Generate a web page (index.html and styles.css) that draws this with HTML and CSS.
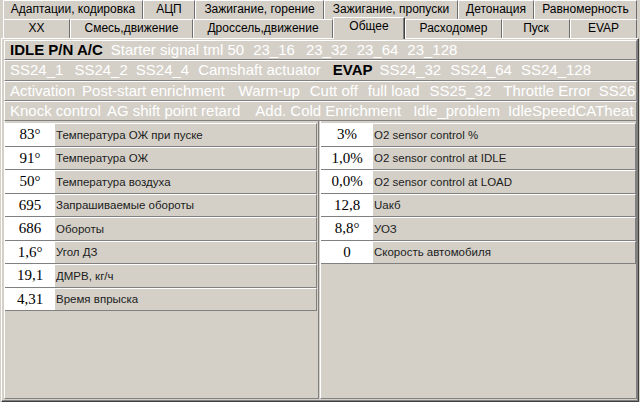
FILE: index.html
```html
<!DOCTYPE html>
<html>
<head>
<meta charset="utf-8">
<link rel="stylesheet" href="styles.css">
</head>
<body>
<div class="tabs">
  <div class="tabrow">
    <div class="tab w140">Адаптации, кодировка</div>
    <div class="tab w52">АЦП</div>
    <div class="tab w129">Зажигание, горение</div>
    <div class="tab w134">Зажигание, пропуски</div>
    <div class="tab w76">Детонация</div>
    <div class="tab w103">Равномерность</div>
  </div>
  <div class="tabrow">
    <div class="tab w67">XX</div>
    <div class="tab w123">Смесь,движение</div>
    <div class="tab w140">Дроссель,движение</div>
    <div class="tab w72 sel">Общее</div>
    <div class="tab w97">Расходомер</div>
    <div class="tab w68">Пуск</div>
    <div class="tab w67">EVAP</div>
  </div>
</div>
<div class="panel">
  <div class="flags">
    <div class="frow"><span class="on">IDLE P/N A/C</span><span>Starter signal tml 50</span><span class="m1">23_16</span><span class="m3">23_32</span><span class="m1">23_64</span><span class="m1">23_128</span></div>
    <div class="frow"><span>SS24_1</span><span class="m3">SS24_2</span><span>SS24_4</span><span class="m1">Camshaft actuator</span><span class="on m4">EVAP</span><span class="m-1">SS24_32</span><span class="m1">SS24_64</span><span class="m1">SS24_128</span></div>
    <div class="frow"><span>Activation</span><span class="m-1">Post-start enrichment</span><span class="m6">Warm-up</span><span class="m2">Cutt off</span><span class="m2">full load</span><span class="m2">SS25_32</span><span class="m4">Throttle Error</span><span class="m-1">SS26</span></div>
    <div class="frow"><span>Knock control</span><span class="m-2">AG shift point retard</span><span class="m7">Add. Cold Enrichment</span><span class="m4">Idle_problem</span><span>IdleSpeedCATheat</span></div>
  </div>
  <div class="tables">
    <div class="sub left">
      <div class="row"><div class="val">83°</div><div class="lab">Температура ОЖ при пуске</div></div>
      <div class="row"><div class="val">91°</div><div class="lab">Температура ОЖ</div></div>
      <div class="row"><div class="val">50°</div><div class="lab">Температура воздуха</div></div>
      <div class="row"><div class="val">695</div><div class="lab">Запрашиваемые обороты</div></div>
      <div class="row"><div class="val">686</div><div class="lab">Обороты</div></div>
      <div class="row"><div class="val">1,6°</div><div class="lab">Угол ДЗ</div></div>
      <div class="row"><div class="val">19,1</div><div class="lab">ДМРВ, кг/ч</div></div>
      <div class="row"><div class="val">4,31</div><div class="lab">Время впрыска</div></div>
    </div>
    <div class="sub right">
      <div class="row"><div class="val">3%</div><div class="lab">O2 sensor control %</div></div>
      <div class="row"><div class="val">1,0%</div><div class="lab">O2 sensor control at IDLE</div></div>
      <div class="row"><div class="val">0,0%</div><div class="lab">O2 sensor control at LOAD</div></div>
      <div class="row"><div class="val">12,8</div><div class="lab">Uакб</div></div>
      <div class="row"><div class="val">8,8°</div><div class="lab">УОЗ</div></div>
      <div class="row"><div class="val">0</div><div class="lab">Скорость автомобиля</div></div>
    </div>
  </div>
</div>
</body>
</html>
```
FILE: styles.css
```css
* { box-sizing: border-box; }
html, body { margin: 0; padding: 0; }
body {
  width: 640px;
  height: 402px;
  overflow: hidden;
  background: #d4d0c8;
  font-family: "Liberation Sans", Arial, sans-serif;
}

/* tabs */
.tabs { height: 38px; padding-left: 3px; }
.tabrow { display: flex; height: 19px; align-items: flex-start; }
.tab {
  height: 19px;
  border-top: 1px solid #ffffff;
  border-left: 1px solid #ffffff;
  border-right: 1px solid #6e6e6e;
  font-size: 12px;
  line-height: 17px;
  text-align: center;
  color: #000;
  white-space: nowrap;
  overflow: hidden;
}
.tab.sel {
  position: relative;
  z-index: 1;
  margin-top: -2px;
  height: 22px;
  background: #d4d0c8;
  border-right-color: #404040;
  box-shadow: inset -1px 0 #808080;
}
.w52 { width: 52px; }
.w67 { width: 67px; }
.w68 { width: 68px; }
.w72 { width: 72px; }
.w76 { width: 76px; }
.w97 { width: 97px; }
.w103 { width: 103px; }
.w123 { width: 123px; }
.w129 { width: 129px; }
.w134 { width: 134px; }
.w140 { width: 140px; }

/* main panel */
.panel {
  margin-left: 1px;
  width: 638px;
  height: 364px;
  border-top: 1px solid #ffffff;
  border-left: 1px solid #ffffff;
  border-right: 1px solid #404040;
  border-bottom: 1px solid #404040;
  box-shadow: inset -1px -1px #808080;
  padding: 1px 1px 0 2px;
  display: flex;
  flex-direction: column;
}

.flags { display: flex; flex-direction: column; }
.frow {
  height: 20.3px;
  display: flex;
  align-items: center;
  gap: 8px;
  padding-left: 5px;
  border-top: 1px solid #ffffff;
  border-left: 1px solid #ffffff;
  border-bottom: 1px solid #808080;
  border-right: 1px solid #808080;
  font-size: 15px;
  line-height: 18px;
  color: #ffffff;
  white-space: nowrap;
  overflow: hidden;
}
.frow span { flex: none; }
.frow .on { color: #000; font-weight: bold; }
.m-2 { margin-left: -2px; }
.m-1 { margin-left: -1px; }
.m1 { margin-left: 1px; }
.m2 { margin-left: 2px; }
.m3 { margin-left: 3px; }
.m4 { margin-left: 4px; }
.m6 { margin-left: 6px; }
.m7 { margin-left: 7px; }

.tables {
  flex: 1;
  display: flex;
  gap: 1px;
  padding-bottom: 2px;
}
.sub {
  display: flex;
  flex-direction: column;
  padding-top: 2px;
  border-left: 1px solid #ffffff;
  border-right: 1px solid #808080;
  border-bottom: 1px solid #808080;
}
.sub.left { width: 315px; padding-right: 1px; }
.sub.right { flex: 1; }

.row {
  display: flex;
  height: 23.5px;
  border-top: 1px solid #ffffff;
  border-bottom: 1px solid #808080;
  border-right: 1px solid #808080;
}
.val {
  width: 50px;
  background: #ffffff;
  display: flex;
  align-items: center;
  justify-content: center;
  font-family: "Liberation Serif", "Times New Roman", serif;
  font-size: 15px;
  color: #000;
}
.right .val { width: 52px; }
.lab {
  flex: 1;
  display: flex;
  align-items: center;
  padding-left: 1px;
  font-size: 11.5px;
  color: #1c1c1c;
  white-space: nowrap;
}
```
